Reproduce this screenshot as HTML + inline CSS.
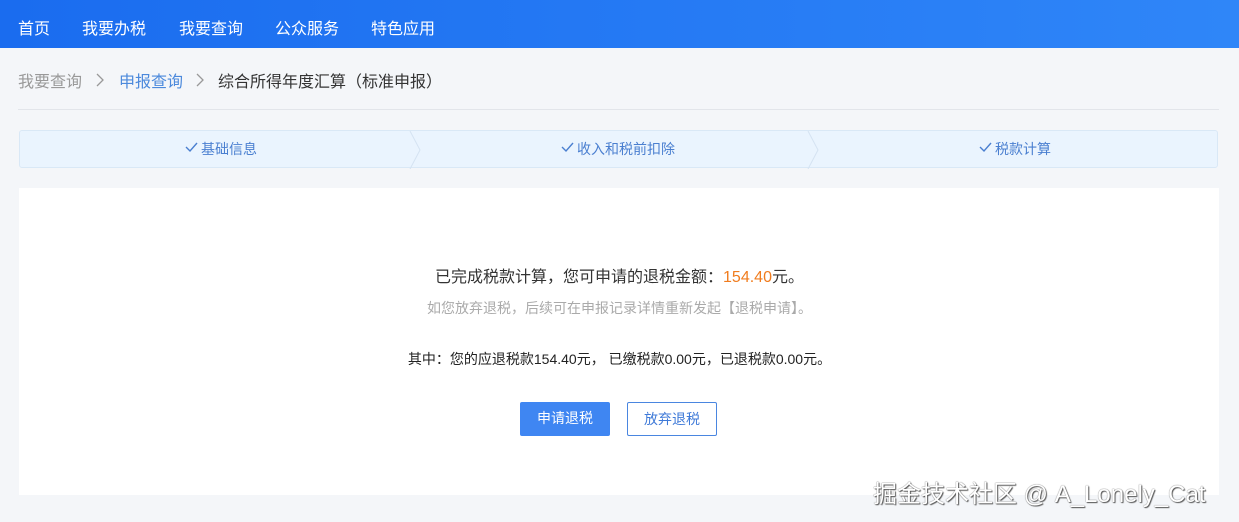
<!DOCTYPE html><html><head><meta charset="utf-8"><style>
*{margin:0;padding:0;box-sizing:border-box}
body{width:1239px;height:522px;background:#f4f6f9;font-family:"Liberation Sans","Noto Sans CJK SC",sans-serif;position:relative;overflow:hidden}
.hd{height:48px;background:linear-gradient(90deg,#1a6cef,#2f86f8);color:#fff;font-size:16px}
.hd span{position:absolute;top:15px}
.bc{position:absolute;top:68px;font-size:16px;color:#999}
.line{position:absolute;top:109px;left:18px;width:1201px;height:1px;background:#e2e5ea}
.steps{position:absolute;top:130px;left:19px;width:1199px;height:38px;background:#eaf4fe;border:1px solid #d9e8f6;border-radius:3px;font-size:14px;color:#4a7fd0}
.steps span{position:absolute;top:8px}
.steps svg.c{position:absolute;top:11px}
.card{position:absolute;top:188px;left:19px;width:1200px;height:307px;background:#fff}
.t{position:absolute;width:100%;text-align:center}
.btn{position:absolute;top:402px;height:34px;font-size:14px;text-align:center;line-height:33px;border-radius:2px}
</style></head><body>
<div class="hd"><span style="left:18px">首页</span><span style="left:82px">我要办税</span><span style="left:179px">我要查询</span><span style="left:275px">公众服务</span><span style="left:371px">特色应用</span></div>
<div class="bc" style="left:18px">我要查询</div>
<svg style="position:absolute;left:95px;top:73px" width="10" height="14"><path d="M2 1 L8 7 L2 13" stroke="#999" stroke-width="1.3" fill="none"/></svg>
<div class="bc" style="left:119px;color:#4b89dc">申报查询</div>
<svg style="position:absolute;left:195px;top:73px" width="10" height="14"><path d="M2 1 L8 7 L2 13" stroke="#999" stroke-width="1.3" fill="none"/></svg>
<div class="bc" style="left:218px;color:#333">综合所得年度汇算（标准申报）</div>
<div class="line"></div>
<div class="steps">
<svg style="position:absolute;left:388px;top:0" width="22" height="38"><path d="M2 0 L12 19 L2 38" stroke="#d5e3f2" fill="none"/></svg>
<svg style="position:absolute;left:786px;top:0" width="22" height="38"><path d="M2 0 L12 19 L2 38" stroke="#d5e3f2" fill="none"/></svg>
<svg class="c" style="left:165px" width="13" height="11"><path d="M1 5 L5 9 L12 1" stroke="#4a7fd0" stroke-width="1.4" fill="none"/></svg><span style="left:181px">基础信息</span>
<svg class="c" style="left:541px" width="13" height="11"><path d="M1 5 L5 9 L12 1" stroke="#4a7fd0" stroke-width="1.4" fill="none"/></svg><span style="left:557px">收入和税前扣除</span>
<svg class="c" style="left:959px" width="13" height="11"><path d="M1 5 L5 9 L12 1" stroke="#4a7fd0" stroke-width="1.4" fill="none"/></svg><span style="left:975px">税款计算</span></div>
<div class="card"></div>
<div class="t" style="top:263px;font-size:16px;color:#333">已完成税款计算，您可申请的退税金额：<span style="color:#f07c1e">154.40</span>元。</div>
<div class="t" style="top:298px;font-size:14px;color:#aaa">如您放弃退税，后续可在申报记录详情重新发起【退税申请】。</div>
<div class="t" style="top:349px;font-size:14px;color:#222">其中：您的应退税款154.40元， 已缴税款0.00元，已退税款0.00元。</div>
<div class="btn" style="left:520px;width:90px;background:#3f86f2;color:#fff">申请退税</div>
<div class="btn" style="left:627px;width:90px;border:1px solid #4a86e0;color:#3f7ad8;background:#fff">放弃退税</div>
<div style="position:absolute;left:873px;top:474px;font-size:24px;letter-spacing:0.0px;color:#fff;text-shadow:1px 1px 1px #555,0 0 1px #333">掘金技术社区 @ A_Lonely_Cat</div>
</body></html>
